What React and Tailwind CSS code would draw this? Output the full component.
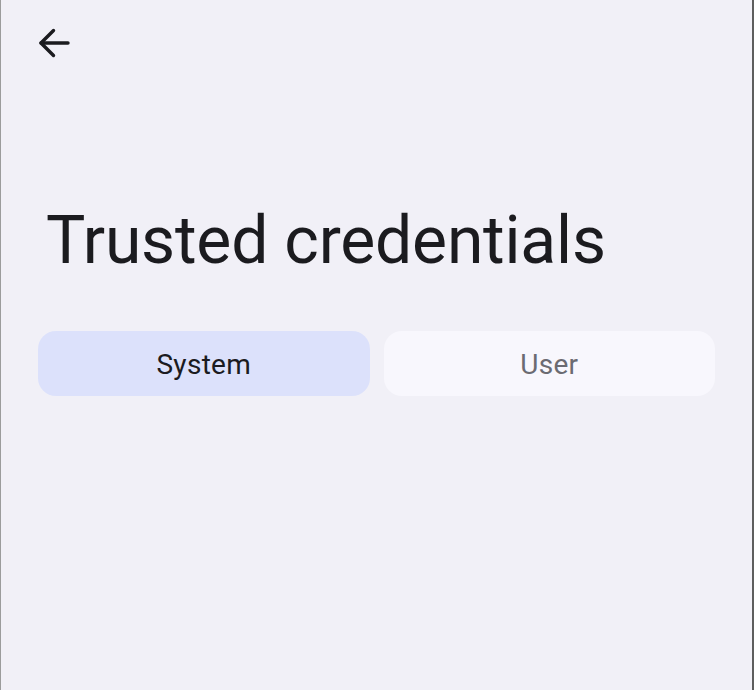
export default function App() {
  return (
    <div
      className="w-[754px] h-[690px] bg-[#f1f0f7] border-l border-l-[#9c9c9c] border-r-2 border-r-[#5e5e5e] flex flex-col"
      style={{ fontFamily: 'Roboto, "Noto Sans", sans-serif' }}
    >
      <div className="pl-[37px] pt-[28px]">
        <button className="w-[32px] h-[31px] flex items-center justify-center">
          <svg width="32" height="31" viewBox="0 0 32 31" fill="none" stroke="#1b1b1f" strokeWidth="3.4" strokeLinecap="round" strokeLinejoin="round">
            <path d="M3 15h27" />
            <path d="M15.5 2.5 3 15l12.5 12.5" />
          </svg>
        </button>
      </div>

      <h1 className="mt-[142px] pl-[45px] text-[66px] leading-[80px] text-[#1b1b1f] tracking-[-0.2px]">
        Trusted credentials
      </h1>

      <div className="mt-[50px] px-[37px] flex gap-[14px]">
        <button className="flex-1 h-[65px] pt-[3px] rounded-[18px] bg-[#dce1fb] text-[28px] tracking-[0.3px] text-[#1b1b21]">
          System
        </button>
        <button className="flex-1 h-[65px] pt-[3px] rounded-[18px] bg-[#f8f7fd] text-[28px] tracking-[0.3px] text-[#6b6b72]">
          User
        </button>
      </div>
    </div>
  );
}
